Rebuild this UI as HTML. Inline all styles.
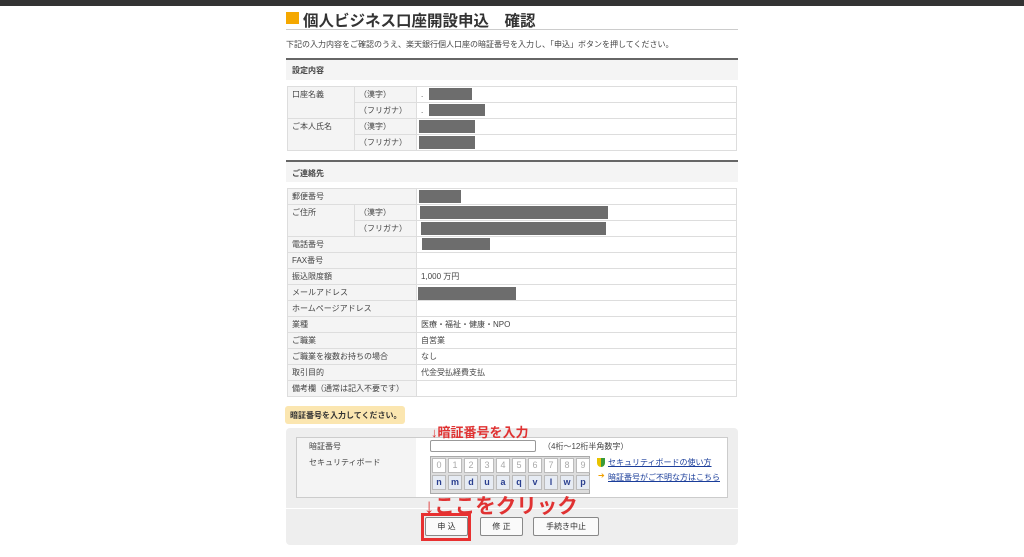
<!DOCTYPE html><html><head><meta charset="utf-8"><style>
*{margin:0;padding:0;box-sizing:border-box}
body{width:1024px;height:557px;background:#fff;position:relative;overflow:hidden;font-family:"Liberation Sans","Noto Sans CJK JP",sans-serif;color:#333}
.a{position:absolute;white-space:nowrap}
.t{font-size:8px;color:#444}
.r{position:absolute;background:#6d6d6d}
table{position:absolute;border-collapse:collapse;font-size:8px;color:#444}
td{border:1px solid #ddd;height:16px;padding:0 4px;vertical-align:top;line-height:15px}
td.g{background:#f4f4f4}
.k{position:absolute;width:14px;height:15px;border:1px solid #bbb;background:#fff;font-size:9px;color:#aaa;text-align:center;line-height:13px}
.k2{background:#e6ebf3;color:#2a3f8f;font-weight:bold}
.b{position:absolute;height:19px;border:1px solid #888;background:#fafafa;font-size:8px;text-align:center;line-height:17px;border-radius:2px}
.red{color:#e03232;font-weight:bold}
</style></head><body>
<div class="a" style="left:0;top:0;width:1024px;height:6px;background:#333"></div>
<div class="a" style="left:286px;top:12px;width:13px;height:12px;background:#f5a800"></div>
<div class="a" style="left:303px;top:9px;font-size:15.5px;font-weight:bold;color:#333">個人ビジネス口座開設申込　確認</div>
<div class="a" style="left:286px;top:29px;width:452px;height:1px;background:#ccc"></div>
<div class="a t" style="left:286px;top:39px">下記の入力内容をご確認のうえ、楽天銀行個人口座の暗証番号を入力し、「申込」ボタンを押してください。</div>
<div class="a" style="left:286px;top:58px;width:452px;height:2px;background:#666"></div>
<div class="a" style="left:286px;top:60px;width:452px;height:20px;background:#f4f4f4"></div>
<div class="a t" style="left:292px;top:65px;font-weight:bold">設定内容</div>
<table style="left:287px;top:86px;width:450px">
<tr><td class="g" rowspan="2" style="width:67px">口座名義</td><td class="g" style="width:62px">（漢字）</td><td>.</td></tr>
<tr><td class="g">（フリガナ）</td><td>.</td></tr>
<tr><td class="g" rowspan="2">ご本人氏名</td><td class="g">（漢字）</td><td></td></tr>
<tr><td class="g">（フリガナ）</td><td></td></tr>
</table>
<div class="r" style="left:429px;top:88px;width:43px;height:12px"></div>
<div class="r" style="left:429px;top:104px;width:56px;height:12px"></div>
<div class="r" style="left:419px;top:120px;width:56px;height:13px"></div>
<div class="r" style="left:419px;top:136px;width:56px;height:13px"></div>
<div class="a" style="left:286px;top:160px;width:452px;height:2px;background:#666"></div>
<div class="a" style="left:286px;top:162px;width:452px;height:20px;background:#f4f4f4"></div>
<div class="a t" style="left:292px;top:168px;font-weight:bold">ご連絡先</div>
<table style="left:287px;top:188px;width:450px">
<tr><td class="g" colspan="2" style="width:129px">郵便番号</td><td></td></tr>
<tr><td class="g" rowspan="2" style="width:67px">ご住所</td><td class="g" style="width:62px">（漢字）</td><td></td></tr>
<tr><td class="g">（フリガナ）</td><td></td></tr>
<tr><td class="g" colspan="2">電話番号</td><td></td></tr>
<tr><td class="g" colspan="2">FAX番号</td><td></td></tr>
<tr><td class="g" colspan="2">振込限度額</td><td>1,000 万円</td></tr>
<tr><td class="g" colspan="2">メールアドレス</td><td></td></tr>
<tr><td class="g" colspan="2">ホームページアドレス</td><td></td></tr>
<tr><td class="g" colspan="2">業種</td><td>医療・福祉・健康・NPO</td></tr>
<tr><td class="g" colspan="2">ご職業</td><td>自営業</td></tr>
<tr><td class="g" colspan="2">ご職業を複数お持ちの場合</td><td>なし</td></tr>
<tr><td class="g" colspan="2">取引目的</td><td>代金受払経費支払</td></tr>
<tr><td class="g" colspan="2">備考欄（通常は記入不要です）</td><td></td></tr>
</table>
<div class="r" style="left:419px;top:190px;width:42px;height:13px"></div>
<div class="r" style="left:420px;top:206px;width:188px;height:13px"></div>
<div class="r" style="left:421px;top:222px;width:185px;height:13px"></div>
<div class="r" style="left:422px;top:238px;width:68px;height:12px"></div>
<div class="r" style="left:418px;top:287px;width:98px;height:13px"></div>
<div class="a" style="left:286px;top:428px;width:452px;height:117px;background:#eee;border-radius:4px"></div>
<div class="a" style="left:285px;top:406px;width:120px;height:18px;background:#fbe6b0;border-radius:3px"></div>
<div class="a t" style="left:290px;top:410px;font-weight:bold;color:#333">暗証番号を入力してください。</div>
<div class="a" style="left:296px;top:437px;width:432px;height:61px;background:#fff;border:1px solid #ccc"></div>
<div class="a" style="left:297px;top:438px;width:119px;height:59px;background:#f4f4f4"></div>
<div class="a t" style="left:309px;top:441px">暗証番号</div>
<div class="a t" style="left:309px;top:457px">セキュリティボード</div>
<div class="a" style="left:430px;top:440px;width:106px;height:12px;border:1px solid #999;border-radius:2px;background:#fff"></div>
<div class="a t" style="left:543px;top:441px">（4桁〜12桁半角数字）</div>
<div class="a" style="left:430px;top:456px;width:160px;height:38px;background:#ddd;border:1px solid #aaa"></div>
<div class="k" style="left:432px;top:458px">0</div><div class="k" style="left:448px;top:458px">1</div><div class="k" style="left:464px;top:458px">2</div><div class="k" style="left:480px;top:458px">3</div><div class="k" style="left:496px;top:458px">4</div><div class="k" style="left:512px;top:458px">5</div><div class="k" style="left:528px;top:458px">6</div><div class="k" style="left:544px;top:458px">7</div><div class="k" style="left:560px;top:458px">8</div><div class="k" style="left:576px;top:458px">9</div>
<div class="k k2" style="left:432px;top:475px">n</div><div class="k k2" style="left:448px;top:475px">m</div><div class="k k2" style="left:464px;top:475px">d</div><div class="k k2" style="left:480px;top:475px">u</div><div class="k k2" style="left:496px;top:475px">a</div><div class="k k2" style="left:512px;top:475px">q</div><div class="k k2" style="left:528px;top:475px">v</div><div class="k k2" style="left:544px;top:475px">l</div><div class="k k2" style="left:560px;top:475px">w</div><div class="k k2" style="left:576px;top:475px">p</div>
<div class="a" style="left:597px;top:458px;width:8px;height:9px;background:linear-gradient(90deg,#e8c300 50%,#3a9a3a 50%);border-radius:0 0 4px 4px"></div>
<div class="a" style="left:608px;top:457px;font-size:8px;color:#1a3d9a;text-decoration:underline">セキュリティボードの使い方</div>
<div class="a" style="left:598px;top:471px;font-size:8px;color:#f0a000">➔</div>
<div class="a" style="left:608px;top:472px;font-size:8px;color:#1a3d9a;text-decoration:underline">暗証番号がご不明な方はこちら</div>
<div class="a" style="left:286px;top:508px;width:452px;height:1px;background:#fff"></div>
<div class="a red" style="left:431px;top:422px;font-size:13px">↓暗証番号を入力</div>
<div class="a red" style="left:424px;top:489px;font-size:20.5px">↓ここをクリック</div>
<div class="a" style="left:421px;top:513px;width:50px;height:28px;border:3px solid #e83030"></div>
<div class="b" style="left:425px;top:517px;width:43px">申 込</div>
<div class="b" style="left:480px;top:517px;width:43px">修 正</div>
<div class="b" style="left:533px;top:517px;width:66px">手続き中止</div>
</body></html>
